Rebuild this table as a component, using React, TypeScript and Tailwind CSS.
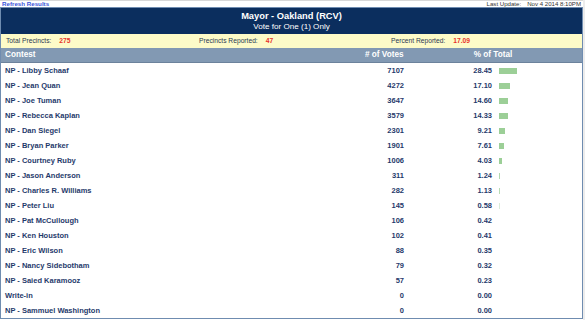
import React from "react";

const rows: [string, number, string][] = [
  ["NP - Libby Schaaf", 7107, "28.45"],
  ["NP - Jean Quan", 4272, "17.10"],
  ["NP - Joe Tuman", 3647, "14.60"],
  ["NP - Rebecca Kaplan", 3579, "14.33"],
  ["NP - Dan Siegel", 2301, "9.21"],
  ["NP - Bryan Parker", 1901, "7.61"],
  ["NP - Courtney Ruby", 1006, "4.03"],
  ["NP - Jason Anderson", 311, "1.24"],
  ["NP - Charles R. Williams", 282, "1.13"],
  ["NP - Peter Liu", 145, "0.58"],
  ["NP - Pat McCullough", 106, "0.42"],
  ["NP - Ken Houston", 102, "0.41"],
  ["NP - Eric Wilson", 88, "0.35"],
  ["NP - Nancy Sidebotham", 79, "0.32"],
  ["NP - Saied Karamooz", 57, "0.23"],
  ["Write-in", 0, "0.00"],
  ["NP - Sammuel Washington", 0, "0.00"],
];

export default function App() {
  return (
    <div
      className="w-[585px] h-[320px] bg-white flex overflow-hidden"
      style={{ fontFamily: '"Liberation Sans", Arial, sans-serif' }}
    >
      <div className="w-[583px] flex flex-col">
        <div className="h-[7px] flex items-center justify-between border-t border-[#d8d8d8]">
          <span className="pl-[2px] text-[6.2px] leading-none font-bold text-[#3b55d9]">Refresh Results</span>
          <span className="pr-[2px] text-[6.1px] leading-none text-[#333] flex gap-[6px]">
            <span>Last Update:</span>
            <span>Nov 4 2014 8:10PM</span>
          </span>
        </div>
        <div className="flex-1 flex flex-col border border-[#6f8cb0]">
          <div className="h-[26px] bg-[#0b2e5e] text-white flex flex-col items-center justify-center">
            <div className="text-[9.3px] leading-[11px] font-bold">Mayor - Oakland (RCV)</div>
            <div className="text-[8.1px] leading-[9px]">Vote for One (1) Only</div>
          </div>
          <div className="h-[14px] bg-[#fdfbc8] flex items-center text-[6.7px] text-[#2b3a55]">
            <div className="w-[197px] pl-[5px] flex gap-[8px]">
              <span>Total Precincts:</span>
              <span className="text-[#e8332a] font-bold">275</span>
            </div>
            <div className="w-[193px] pl-[1px] flex gap-[8px]">
              <span>Precincts Reported:</span>
              <span className="text-[#e8332a] font-bold">47</span>
            </div>
            <div className="flex gap-[8px]">
              <span>Percent Reported:</span>
              <span className="text-[#e8332a] font-bold">17.09</span>
            </div>
          </div>
          <div className="h-[15px] bg-[#8299b3] border-b border-[#6c829c] grid grid-cols-[357px_48px_1fr] items-center text-[8.2px] font-bold text-white">
            <div className="pl-[4px]">Contest</div>
            <div className="text-center">
              <span className="whitespace-nowrap">&nbsp;&nbsp;# of Votes</span>
            </div>
            <div className="text-center pr-[2px]">% of Total</div>
          </div>
          <div className="flex flex-col">
            {rows.map(([name, votes, pct]) => {
              const w = parseFloat(pct) * 0.64;
              return (
                <div
                  key={name}
                  className="h-[15px] grid grid-cols-[357px_48px_1fr] items-center text-[7.5px] font-bold text-[#1f3a6b]"
                >
                  <div className="pl-[4px]">{name}</div>
                  <div className="text-right pr-[2px]">{votes}</div>
                  <div className="flex items-center">
                    <div className="w-[86px] text-right">{pct}</div>
                    {w >= 0.3 && (
                      <div
                        className="ml-[7px] h-[6px] bg-[#9ccf97]"
                        style={{ width: `${Math.max(1, w)}px`, opacity: w < 1 ? Math.max(0.3, w) : 1 }}
                      />
                    )}
                  </div>
                </div>
              );
            })}
          </div>
        </div>
        <div className="h-[2px]" />
      </div>
      <div className="flex-1 bg-[#ececec]" />
    </div>
  );
}
